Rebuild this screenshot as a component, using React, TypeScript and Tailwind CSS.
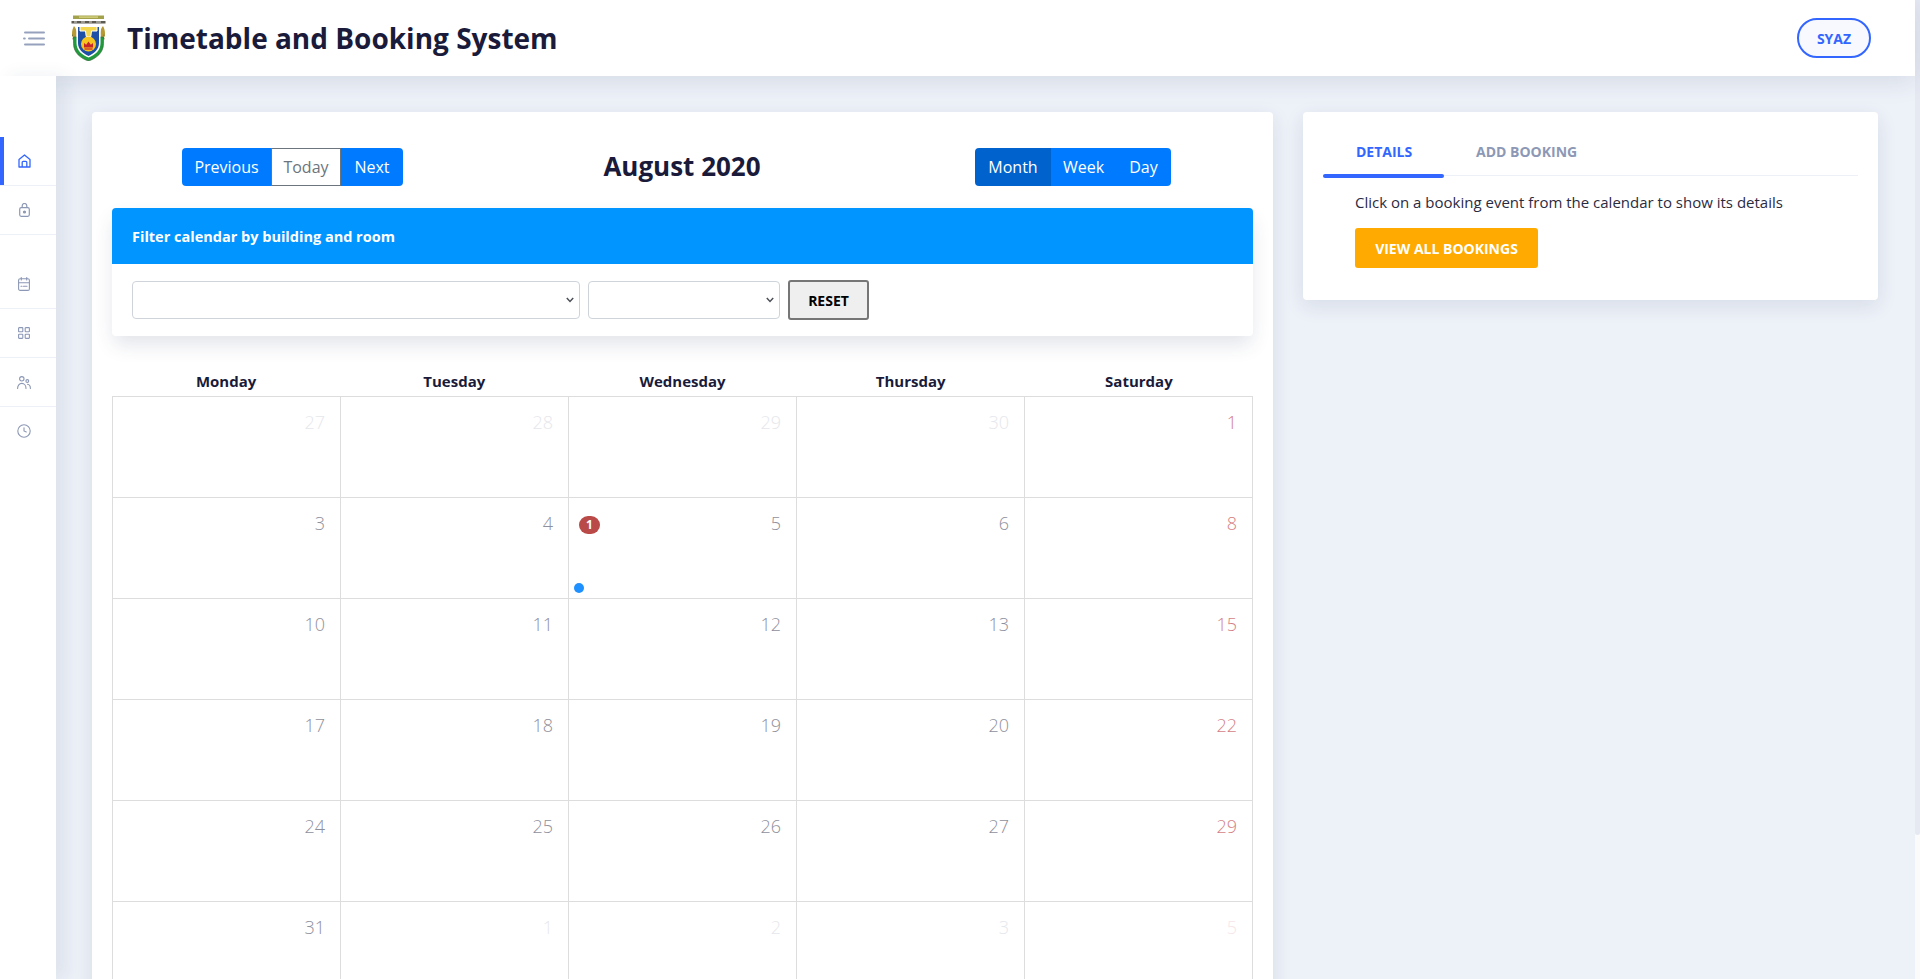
import React from "react";

const font = { fontFamily: '"Open Sans", "Noto Sans", sans-serif' };

function HamburgerIcon() {
  return (
    <svg width="22" height="15" viewBox="0 0 22 15" fill="none" stroke="#95a1bd" strokeWidth="2" strokeLinecap="round">
      <path d="M2 1.500h19" />
      <path d="M1 7.500h.8" />
      <path d="M6 7.500h15" />
      <path d="M2 13.500h19" />
    </svg>
  );
}

function Crest() {
  return (
    <svg width="35" height="46" viewBox="0 0 35 46">
      <path d="M2 .5h31v3.500H2z" fill="#a3a24a" />
      <path d="M8 1.500h19v1.200H8z" fill="#e0dc8c" />
      <path d="M.5 6h34v2.600H.5z" fill="#5d5a52" />
      <path d="M3 6.500h3v1H3zM10 6.500h4v1h-4zM18 6.500h3v1h-3zM25 6.500h5v1h-5z" fill="#d8d8d0" />
      <path d="M3 11c2 2 3 5 2.500 9.500L5 27c-2.500-2-4-5-4-8.500S2 13 3 11z" fill="#b79a35" />
      <path d="M32 11c-2 2-3 5-2.500 9.500L30 27c2.500-2 4-5 4-8.500S33 13 32 11z" fill="#b79a35" />
      <path d="M1.500 19.500v1.500M2 23v1.500M33 19.500v1.500M33 23v1.500" stroke="#6f6a2a" strokeWidth="0.8" />
      <path d="M2.500 22h30v6.500C32.500 38 25 43.500 17.500 46 10 43.500 2.500 38 2.500 28.500z" fill="#1f9a3c" stroke="#3d5a3a" strokeWidth="0.6" />
      <path d="M5.500 11h24v17c0 7.500-5.500 12-12 14.500C11 40 5.500 35.500 5.500 28z" fill="#fff" />
      <path d="M7 12h21v16c0 6.500-5 10.500-10.500 13C12 38.500 7 34.500 7 28z" fill="#1d4fa6" />
      <path d="M9 11.500h17v4.500h-5.500l-.7 5.500h-4.600l-.7-5.500H9z" fill="#f2d64e" stroke="#fff" strokeWidth="1" />
      <circle cx="17.500" cy="29" r="7.500" fill="#f7c51e" />
      <path d="M13 32.500v-4.500l2.200 1.800 2.300-3.300 2.300 3.300L22 28v4.500z" fill="#c8242c" />
      <path d="M13.500 34h8" stroke="#c8242c" strokeWidth="1.200" />
    </svg>
  );
}

function HomeIcon() {
  return (
    <svg width="13" height="14" viewBox="0 0 13 14" fill="none" stroke="#3366ff" strokeWidth="1.300" strokeLinejoin="round">
      <path d="M1 5.500 6.500 1 12 5.500V13H1z" />
      <path d="M4.200 13V8.300a1 1 0 0 1 1-1h2.600a1 1 0 0 1 1 1V13" />
    </svg>
  );
}

function LockIcon() {
  return (
    <svg width="11" height="14" viewBox="0 0 11 14" fill="none" stroke="#8c98b5" strokeWidth="1.200">
      <rect x="0.700" y="4.700" width="9.600" height="8.600" rx="1.500" />
      <path d="M3.200 4.700V2.800a2.300 2.300 0 0 1 4.600 0v1.900" />
      <circle cx="5.500" cy="9" r="1" fill="#8c98b5" />
    </svg>
  );
}

function CalendarIcon() {
  return (
    <svg width="12" height="14" viewBox="0 0 12 14" fill="none" stroke="#8c98b5" strokeWidth="1.100" strokeLinecap="round">
      <rect x="0.600" y="1.800" width="10.800" height="11.600" rx="1.500" />
      <path d="M.6 5.800h10.800" />
      <path d="M3.300 .6v2.400" />
      <path d="M8.700 .6v2.400" />
      <path d="M3 9.300h1" />
      <path d="M5.500 9.300h3.500" />
    </svg>
  );
}

function GridIcon() {
  return (
    <svg width="12" height="12" viewBox="0 0 12 12" fill="none" stroke="#8c98b5" strokeWidth="1.100">
      <rect x="0.600" y="0.600" width="4.200" height="4.200" rx="0.600" />
      <rect x="7.200" y="0.600" width="4.200" height="4.200" rx="0.600" />
      <rect x="0.600" y="7.200" width="4.200" height="4.200" rx="0.600" />
      <rect x="7.200" y="7.200" width="4.200" height="4.200" rx="0.600" />
    </svg>
  );
}

function UsersIcon() {
  return (
    <svg width="14" height="13" viewBox="0 0 14 13" fill="none" stroke="#8c98b5" strokeWidth="1.100" strokeLinecap="round">
      <circle cx="4.800" cy="2.800" r="2.200" />
      <path d="M.6 12.400c0-3 1.700-5 4.200-5s4.200 2 4.200 5" />
      <circle cx="10.300" cy="5" r="1.400" />
      <path d="M10.500 8.200c1.700.2 2.900 1.900 2.900 4.200" />
    </svg>
  );
}

function ClockIcon() {
  return (
    <svg width="14" height="14" viewBox="0 0 14 14" fill="none" stroke="#8c98b5" strokeWidth="1.100" strokeLinecap="round">
      <circle cx="7" cy="7" r="6.200" />
      <path d="M7 3.800V7l2.300 1" />
    </svg>
  );
}

function NavItem({ icon, active, border = true, className = "" }: { icon: React.ReactNode; active?: boolean; border?: boolean; className?: string }) {
  return (
    <div className={`relative flex h-[49px] items-center border-b ${border ? "border-[#edf0f6]" : "border-transparent"} ${className}`}>
      {active && <span className="absolute left-0 top-0 h-[48px] w-1 bg-[#3366ff]" />}
      <div className="flex w-[48px] justify-center">{icon}</div>
    </div>
  );
}

function SegButton({ label, tone, width }: { label: string; tone: "blue" | "dark" | "white"; width: string }) {
  const cls =
    tone === "blue"
      ? "bg-[#007bff] text-white"
      : tone === "dark"
      ? "bg-[#0062cc] text-white"
      : "bg-white text-[#6c757d] border border-[#6c757d]";
  return <div className={`flex h-[38px] items-center justify-center text-[16px] ${width} ${cls}`}>{label}</div>;
}

function SelectBox({ className }: { className: string }) {
  return (
    <div className={`relative h-[38px] ${className}`}>
      <select className="h-full w-full appearance-none rounded border border-[#ced4da] bg-white" />
      <svg className="pointer-events-none absolute right-[6px] top-[16px]" width="8" height="6" viewBox="0 0 8 6" fill="none" stroke="#4a4f57" strokeWidth="1.500">
        <path d="M.8 1 4 4.400 7.200 1" />
      </svg>
    </div>
  );
}

type Day = { n: number; dim?: boolean };
const rows: Day[][] = [
  [{ n: 27, dim: true }, { n: 28, dim: true }, { n: 29, dim: true }, { n: 30, dim: true }, { n: 1 }],
  [{ n: 3 }, { n: 4 }, { n: 5 }, { n: 6 }, { n: 8 }],
  [{ n: 10 }, { n: 11 }, { n: 12 }, { n: 13 }, { n: 15 }],
  [{ n: 17 }, { n: 18 }, { n: 19 }, { n: 20 }, { n: 22 }],
  [{ n: 24 }, { n: 25 }, { n: 26 }, { n: 27 }, { n: 29 }],
  [{ n: 31 }, { n: 1, dim: true }, { n: 2, dim: true }, { n: 3, dim: true }, { n: 5, dim: true }],
];

function dayColor(d: Day, sat: boolean) {
  if (sat) return d.dim ? "text-[#f6e6e8]" : "text-[#d47f85]";
  return d.dim ? "text-[#e6e7ec]" : "text-[#8f909c]";
}

export default function App() {
  return (
    <div className="flex h-screen w-full overflow-hidden bg-[#edf1f8]" style={font}>
      <div className="flex h-full min-w-0 flex-1 flex-col">
        <header className="relative z-20 flex h-[76px] shrink-0 items-center justify-between bg-white pl-[23px] pr-[44px] shadow-[0_4px_24px_rgba(40,60,100,0.13)]">
          <div className="flex items-center">
            <HamburgerIcon />
            <div className="ml-[26px] flex"><Crest /></div>
            <h1 className="ml-[21px] text-[28px] font-bold leading-none text-[#1a1b3a]">Timetable and Booking System</h1>
          </div>
          <div className="flex h-[40px] w-[74px] items-center justify-center rounded-full border-2 border-[#3366ff] bg-[#f7f9ff] text-[14px] font-bold text-[#3366ff]">
            SYAZ
          </div>
        </header>

        <div className="flex min-h-0 flex-1">
          <aside className="relative z-30 w-[56px] shrink-0 bg-white pt-[61px] shadow-[10px_0_18px_rgba(40,60,100,0.08)]">
            <NavItem active icon={<HomeIcon />} />
            <NavItem icon={<LockIcon />} />
            <NavItem icon={<CalendarIcon />} className="mt-[25px]" />
            <NavItem icon={<GridIcon />} />
            <NavItem icon={<UsersIcon />} />
            <NavItem border={false} icon={<ClockIcon />} />
          </aside>

          <main className="flex min-w-0 flex-1 items-start gap-[30px] pl-[36px] pt-[36px]">
            <section className="w-[1181px] shrink-0 rounded bg-white px-[20px] pt-[36px] shadow-[0_6px_20px_rgba(40,60,100,0.11)]">
              <div className="relative flex h-[38px] items-center justify-between pl-[70px] pr-[82px]">
                <div className="flex overflow-hidden rounded">
                  <SegButton label="Previous" tone="blue" width="w-[89px]" />
                  <SegButton label="Today" tone="white" width="w-[70px]" />
                  <SegButton label="Next" tone="blue" width="w-[62px]" />
                </div>
                <h2 className="mb-[3px] mr-[14px] text-[26px] font-bold leading-none text-[#1a1b3a]">August 2020</h2>
                <div className="flex overflow-hidden rounded">
                  <SegButton label="Month" tone="dark" width="w-[76px]" />
                  <SegButton label="Week" tone="blue" width="w-[65px]" />
                  <SegButton label="Day" tone="blue" width="w-[55px]" />
                </div>
              </div>

              <div className="mt-[22px] overflow-hidden rounded bg-white shadow-[0_10px_20px_-2px_rgba(40,60,100,0.14)]">
                <div className="flex h-[56px] items-center bg-[#0095ff] px-[20px] pt-[1px] text-[14.5px] font-bold text-white">
                  Filter calendar by building and room
                </div>
                <div className="flex h-[72px] items-center pl-[20px]">
                  <SelectBox className="w-[448px]" />
                  <SelectBox className="ml-[8px] w-[192px]" />
                  <button className="ml-[8px] h-[40px] w-[81px] rounded-[3px] border-2 border-[#767676] bg-[#efefef] text-[14px] font-bold text-black">
                    RESET
                  </button>
                </div>
              </div>

              <div className="mt-[33px] grid grid-cols-5 pb-[2px] text-center text-[15px] font-bold leading-[25px] text-[#1a1b3a]">
                {["Monday", "Tuesday", "Wednesday", "Thursday", "Saturday"].map((d) => (
                  <div key={d}>{d}</div>
                ))}
              </div>
              <div className="border-l border-t border-[#dddddd]">
                {rows.map((row, i) => (
                  <div key={i} className="grid grid-cols-5">
                    {row.map((d, j) => (
                      <div
                        key={j}
                        className={`relative h-[101px] border-b border-r border-[#dddddd] pr-[15px] pt-[12px] text-right text-[18px] font-light leading-[26px] ${dayColor(d, j === 4)}`}
                      >
                        {d.n}
                        {i === 1 && j === 2 && (
                          <>
                            <span className="absolute left-[10px] top-[18px] flex h-[18px] w-[21px] items-center justify-center rounded-full bg-[#b94a48] text-[12px] font-bold leading-none text-white">
                              1
                            </span>
                            <span className="absolute left-[5px] top-[85px] h-[10px] w-[10px] rounded-full bg-[#1e90ff]" />
                          </>
                        )}
                      </div>
                    ))}
                  </div>
                ))}
              </div>
            </section>

            <section className="w-[575px] shrink-0 rounded bg-white px-[20px] pt-[20px] shadow-[0_6px_20px_rgba(40,60,100,0.11)]">
              <div className="flex h-[44px] border-b border-[#edf0f6] text-[14px] font-bold uppercase">
                <div className="relative w-[121px] pl-[33px] pt-[9px] text-[#3366ff]">
                  Details
                  <span className="absolute bottom-[-3px] left-0 h-1 w-full rounded-full bg-[#3366ff]" />
                </div>
                <div className="pl-[32px] pt-[9px] text-[#8c98b5]">Add Booking</div>
              </div>
              <div className="pb-[32px] pl-[32px] pt-[16px]">
                <p className="text-[15px] leading-[21px] text-[#2b2b3f]">Click on a booking event from the calendar to show its details</p>
                <button className="mt-[15px] h-[40px] w-[183px] rounded-[3px] bg-[#ffaa00] text-[14px] font-bold text-white">
                  VIEW ALL BOOKINGS
                </button>
              </div>
            </section>
          </main>
        </div>
      </div>
      <div className="flex h-full w-[5px] shrink-0 flex-col bg-[#fbfbfc]">
        <div className="h-[835px] rounded-b-sm bg-[#e6e9f2]" />
      </div>
    </div>
  );
}
